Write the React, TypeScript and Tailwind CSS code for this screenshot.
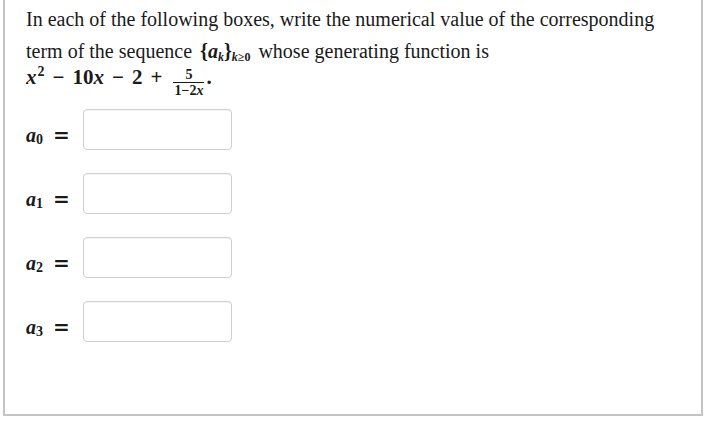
export default function App() {
  const rows = ['0', '1', '2', '3']

  return (
    <div className="w-[706px] h-[435px] bg-white overflow-hidden" style={{ fontFamily: '"Liberation Serif", serif' }}>
      <div className="ml-[3px] mt-[-10px] w-[700px] h-[426px] border-2 border-[#c4c4c4] bg-white">
        <div className="pl-[21px] pt-[11px] text-[20px] text-[#1a1a1a]">
          <p className="h-[32px] leading-[32px]">
            In each of the following boxes, write the numerical value of the corresponding
          </p>
          <p className="h-[26px] leading-[32px]">
            term of the sequence{' '}
            <span className="font-bold mx-[3px]">
              {'{'}<i>a</i><sub className="text-[12px] italic">k</sub>{'}'}
              <sub className="text-[12px]"><i>k</i>≥0</sub>
            </span>{' '}
            whose generating function is
          </p>
          <p className="h-[40px] leading-[32px] font-bold text-[21px] flex items-baseline">
            <i>x</i>
            <span className="text-[14px] relative top-[-8px] ml-[1px]">2</span>
            <span className="mx-[8px]">−</span>10<i>x</i>
            <span className="mx-[8px]">−</span>2
            <span className="mx-[8px]">+</span>
            <span className="inline-flex flex-col items-center ml-[3px] mr-[2px] text-[14px] leading-[13px] relative top-[-5px]">
              <span className="pb-[1px]">5</span>
              <span className="border-t border-[#1a1a1a] pt-[1px] px-[1px]">1−2<i>x</i></span>
            </span>
            <span>.</span>
          </p>
        </div>

        <div className="pl-[21px] mt-[8px] flex flex-col gap-[23px]">
          {rows.map((k) => (
            <div key={k} className="flex items-center h-[41px]">
              <span className="w-[57px] text-[20px] font-bold text-[#1a1a1a] relative top-[5px] flex items-baseline">
                <i>a</i>
                <sub className="text-[14px] relative top-[2px]">{k}</sub>
                <span className="ml-[10px]" style={{ fontFamily: '"DejaVu Serif", serif' }}>=</span>
              </span>
              <div className="w-[149px] h-[41px] rounded-[4px] border border-[#cfcfcf] bg-white shadow-[inset_0_1px_1px_rgba(0,0,0,0.04)]" />
            </div>
          ))}
        </div>
      </div>
    </div>
  )
}
